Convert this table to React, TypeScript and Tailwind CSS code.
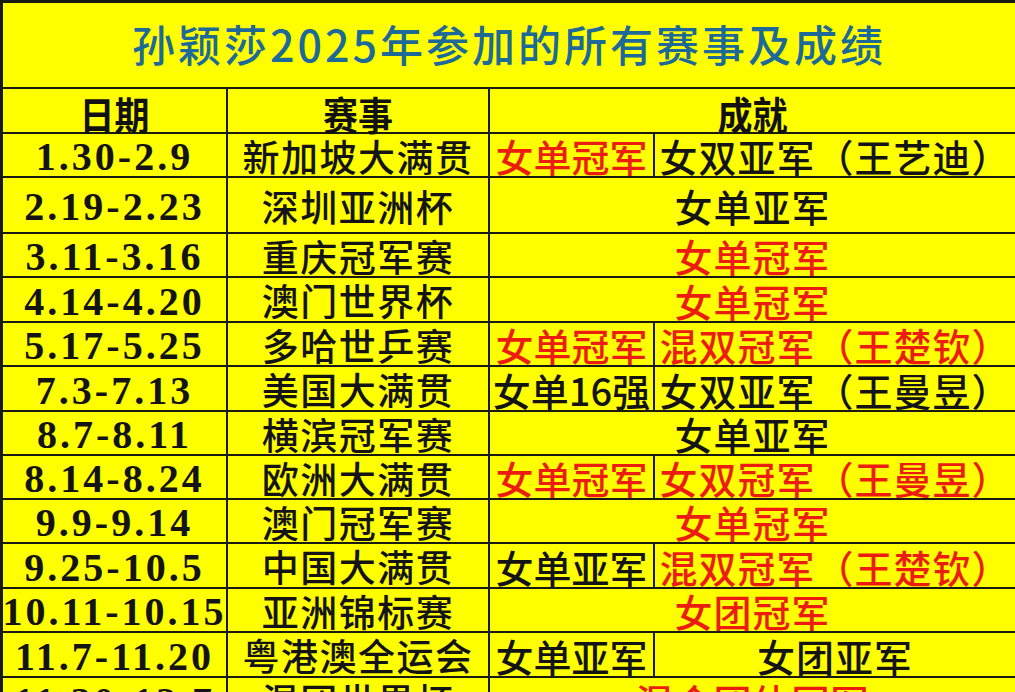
type Cell = { t: string; red?: boolean }

type Row = { d: string; e: string; a: Cell[]; h: string }

const rows: Row[] = [
  { d: "1.30-2.9", e: "新加坡大满贯", a: [{ t: "女单冠军", red: true }, { t: "女双亚军（王艺迪）" }], h: "h-[44px]" },
  { d: "2.19-2.23", e: "深圳亚洲杯", a: [{ t: "女单亚军" }], h: "h-[56px]" },
  { d: "3.11-3.16", e: "重庆冠军赛", a: [{ t: "女单冠军", red: true }], h: "h-[44px]" },
  { d: "4.14-4.20", e: "澳门世界杯", a: [{ t: "女单冠军", red: true }], h: "h-[45px]" },
  { d: "5.17-5.25", e: "多哈世乒赛", a: [{ t: "女单冠军", red: true }, { t: "混双冠军（王楚钦）", red: true }], h: "h-[44px]" },
  { d: "7.3-7.13", e: "美国大满贯", a: [{ t: "女单16强" }, { t: "女双亚军（王曼昱）" }], h: "h-[45px]" },
  { d: "8.7-8.11", e: "横滨冠军赛", a: [{ t: "女单亚军" }], h: "h-[44px]" },
  { d: "8.14-8.24", e: "欧洲大满贯", a: [{ t: "女单冠军", red: true }, { t: "女双冠军（王曼昱）", red: true }], h: "h-[44px]" },
  { d: "9.9-9.14", e: "澳门冠军赛", a: [{ t: "女单冠军", red: true }], h: "h-[44px]" },
  { d: "9.25-10.5", e: "中国大满贯", a: [{ t: "女单亚军" }, { t: "混双冠军（王楚钦）", red: true }], h: "h-[45px]" },
  { d: "10.11-10.15", e: "亚洲锦标赛", a: [{ t: "女团冠军", red: true }], h: "h-[44px]" },
  { d: "11.7-11.20", e: "粤港澳全运会", a: [{ t: "女单亚军" }, { t: "女团亚军" }], h: "h-[45px]" },
  { d: "11.30-12.7", e: "混团世界杯", a: [{ t: "混合团体冠军", red: true }], h: "h-[45px]" },
]

const cjk = "font-['Noto_Sans_CJK_SC',sans-serif]"

export default function App() {
  return (
    <div className="h-[692px] w-[1015px] overflow-hidden bg-[#ffff00]">
      <div className="border-l-[3px] border-[#1a1a14]">
        {/* Title */}
        <div className="flex h-[89px] items-center justify-center border-t-[3px] border-b-2 border-[#1a1a14] pb-1">
          <h1 className={`${cjk} text-[43px] font-medium leading-none tracking-[3px] text-[#1d6a98]`}>
            孙颖莎2025年参加的所有赛事及成绩
          </h1>
        </div>

        {/* Header */}
        <div className="grid h-[45px] grid-cols-[225px_262px_165px_1fr] border-b-2 border-[#1a1a14]">
          {["日期", "赛事"].map((h) => (
            <div key={h} className="flex items-end justify-center border-r-2 border-[#1a1a14] pb-0.5">
              <span className={`${cjk} inline-block scale-y-110 text-[35px] font-bold leading-none text-[#111]`}>{h}</span>
            </div>
          ))}
          <div className="col-span-2 flex items-end justify-center pb-0.5">
            <span className={`${cjk} inline-block scale-y-110 text-[35px] font-bold leading-none text-[#111]`}>成就</span>
          </div>
        </div>

        {/* Rows */}
        {rows.map((r) => (
          <div key={r.d} className={`grid ${r.h} grid-cols-[225px_262px_165px_1fr] border-b-2 border-[#1a1a14]`}>
            <div className="flex items-center justify-center overflow-hidden border-r-2 border-[#1a1a14] pt-1">
              <span className="whitespace-nowrap font-['Liberation_Serif',serif] text-[40px] font-bold leading-none tracking-[3px] text-[#141414]">
                {r.d}
              </span>
            </div>
            <div className="flex items-center justify-center overflow-hidden border-r-2 border-[#1a1a14] pt-0.5">
              <span className={`${cjk} whitespace-nowrap text-[37px] font-medium leading-none tracking-[1.5px] text-[#141414]`}>
                {r.e}
              </span>
            </div>
            {r.a.length === 1 ? (
              <div className="col-span-2 flex items-center justify-center pt-0.5">
                <span
                  className={`${cjk} whitespace-nowrap text-[38px] font-medium leading-none tracking-[1px] ${
                    r.a[0].red ? "text-[#ec1c10]" : "text-[#141414]"
                  }`}
                >
                  {r.a[0].t}
                </span>
              </div>
            ) : (
              <>
                <div className="flex items-center justify-center overflow-hidden border-r-2 border-[#1a1a14] pt-0.5">
                  <span
                    className={`${cjk} whitespace-nowrap text-[38px] font-medium leading-none ${
                      r.a[0].red ? "text-[#ec1c10]" : "text-[#141414]"
                    }`}
                  >
                    {r.a[0].t}
                  </span>
                </div>
                <div className="flex items-center justify-center overflow-hidden pt-0.5">
                  <span
                    className={`${cjk} whitespace-nowrap text-[38px] font-medium leading-none tracking-[1px] ${
                      r.a[1].red ? "text-[#ec1c10]" : "text-[#141414]"
                    }`}
                  >
                    {r.a[1].t}
                  </span>
                </div>
              </>
            )}
          </div>
        ))}
      </div>
    </div>
  )
}
